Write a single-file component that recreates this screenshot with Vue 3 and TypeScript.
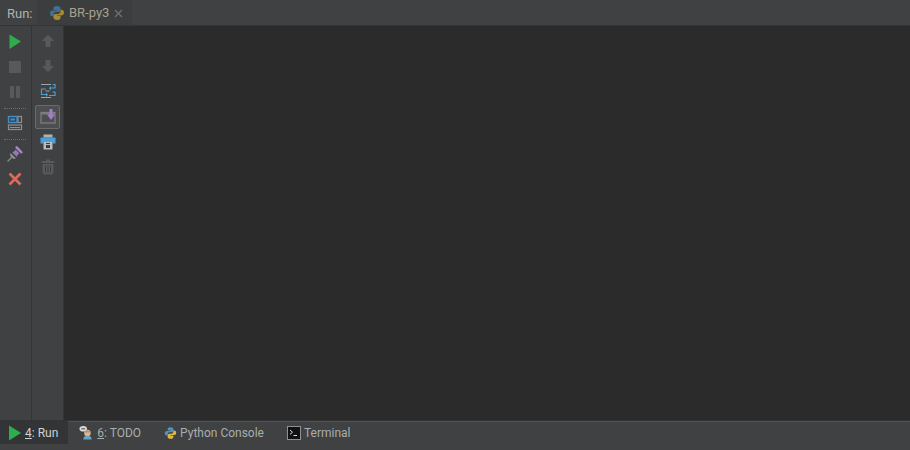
<script setup lang="ts">
const pyPaths = {
  blue: 'M7.800 1C5 1 4.500 2 4.500 3.200V5h3.600v.6H3.200C1.800 5.600 1 6.800 1 8.400s.9 2.800 2.200 2.800h1.300V9.400c0-1.300 1-2.300 2.300-2.300h2.800c1 0 1.900-.9 1.900-1.900V3.200C11.500 2 10.400 1 7.800 1z',
  gold: 'M8.200 15c2.800 0 3.300-1 3.300-2.200V11H7.900v-.6h4.900c1.400 0 2.200-1.200 2.200-2.800s-.9-2.800-2.200-2.800h-1.300v1.800c0 1.300-1 2.300-2.300 2.300H6.400c-1 0-1.900.9-1.900 1.900v2C4.500 14 5.600 15 8.200 15z',
}
</script>

<template>
  <div class="window">
    <header class="tabbar">
      <span class="run-label">Run:</span>
      <div class="tab">
        <svg width="16" height="16" viewBox="0 0 16 16">
          <path :d="pyPaths.blue" fill="#3f7396" />
          <path :d="pyPaths.gold" fill="#a68a34" />
        </svg>
        <span class="tab-name">BR-py3</span>
        <svg class="tab-close" width="9" height="9" viewBox="0 0 9 9">
          <path d="M1 1l7 7M8 1L1 8" stroke="#6f7375" stroke-width="1.100" fill="none" />
        </svg>
      </div>
    </header>

    <div class="body">
      <aside class="rail rail-one">
        <button class="tool">
          <svg width="16" height="16" viewBox="0 0 16 16"><path d="M2.500 0.500L14 7.500 2.500 15z" fill="#2fad4e" /></svg>
        </button>
        <button class="tool">
          <svg width="16" height="16" viewBox="0 0 16 16"><rect x="2" y="2" width="12" height="12" fill="#59595a" /></svg>
        </button>
        <button class="tool">
          <svg width="16" height="16" viewBox="0 0 16 16"><path d="M3 2h4v12H3zM9 2h4v12H9z" fill="#59595a" /></svg>
        </button>
        <div class="dots"></div>
        <button class="tool tool-tight">
          <svg width="16" height="16" viewBox="0 0 16 16">
            <rect x="1.500" y="1.500" width="8.500" height="6" fill="none" stroke="#3f8fc4" stroke-width="1.400" />
            <rect x="3.500" y="3.500" width="4.500" height="2" fill="#3f8fc4" />
            <rect x="11" y="1.500" width="3.500" height="6" fill="none" stroke="#8d8f91" stroke-width="1.200" />
            <rect x="1.500" y="10" width="13" height="4.500" fill="none" stroke="#8d8f91" stroke-width="1.200" />
            <rect x="3" y="12" width="10" height="1" fill="#8d8f91" />
          </svg>
        </button>
        <div class="dots"></div>
        <button class="tool tool-tight">
          <svg width="16" height="16" viewBox="0 0 16 16">
            <path d="M.5 15.500L5 11" stroke="#8a8d8f" stroke-width="1.300" fill="none" />
            <path d="M3.500 7L9 12.500 6.500 13 3 9.500z" fill="#8f9193" />
            <path d="M5 6c1.500 0 2.500-.5 3.500-2.500L12.500 7.500C10.500 8.500 10 9.500 10 11z" fill="#9a78b4" />
            <path d="M8.500 2l5.500 5.500c1.500.2 2-1.200 1-2.200L10.700.8C9.500-.3 8 .6 8.500 2z" fill="#ac88c8" />
          </svg>
        </button>
        <button class="tool">
          <svg width="16" height="16" viewBox="0 0 16 16"><path d="M2.500 2.500l11 11M13.500 2.500l-11 11" stroke="#dd6a5c" stroke-width="2.600" fill="none" /></svg>
        </button>
      </aside>

      <aside class="rail rail-two">
        <button class="tool">
          <svg width="16" height="16" viewBox="0 0 16 16"><path d="M8 1.500L14 8H10.500V14H5.500V8H2z" fill="#59595a" /></svg>
        </button>
        <button class="tool">
          <svg width="16" height="16" viewBox="0 0 16 16"><path d="M8 14.500L14 8H10.500V2H5.500V8H2z" fill="#59595a" /></svg>
        </button>
        <button class="tool">
          <svg width="16" height="16" viewBox="0 0 16 16">
            <path d="M1 1.500h10M5.500 8h4M1 14.500h10" stroke="#a0a2a4" fill="none" />
            <path d="M12.500 1.500h2.500v3.500h-5M6 6h-4.500v5.500h4.500M9 12.500h6v-3.500h-2.500" stroke="#4a9fd8" stroke-width="1.200" fill="none" />
            <path d="M11 3v4.500L9 5.200zM6 9.500v4.500L8 11.800z" fill="#4a9fd8" />
          </svg>
        </button>
        <button class="tool tool-active">
          <svg width="16" height="16" viewBox="0 0 16 16">
            <rect x="1" y="3.500" width="14" height="10.500" fill="none" stroke="#7b7d7f" stroke-width="1.300" />
            <rect x="1" y="3" width="14" height="2.500" fill="#7b7d7f" />
            <path d="M9.500 -1h3v6.500H15L11 11 7 5.500h2.500z" fill="#a57cc6" />
          </svg>
        </button>
        <button class="tool">
          <svg width="16" height="16" viewBox="0 0 16 16">
            <path d="M3.500 0.500h9v3h-9z" fill="#b0b2b4" />
            <path d="M0.500 3.500h15v6h-3V7.500h-9v2h-3z" fill="#4a9fd8" />
            <path d="M3.500 7.500h9v8h-9z" fill="#b9bbbc" />
            <path d="M6 9h4v1H6zM6 11h4v3H6z" fill="#3c3f41" />
          </svg>
        </button>
        <button class="tool">
          <svg width="16" height="16" viewBox="0 0 16 16">
            <path d="M6 .5h4v1.500h4.500v2H1.500V2H6z" fill="#59595a" />
            <path d="M2.500 5h11v8.500l-1.500 2H4l-1.500-2z" fill="#59595a" />
            <path d="M5.500 6.500v7M8 6.500v7M10.500 6.500v7" stroke="#3c3f41" fill="none" />
          </svg>
        </button>
      </aside>

      <main class="console"></main>
    </div>

    <footer class="statusbar">
      <div class="stripe stripe-active">
        <svg width="14" height="16" viewBox="0 0 14 16"><path d="M1 .5L13 8 1 15.500z" fill="#2fad4e" /></svg>
        <span class="stripe-label bright"><u>4</u>: Run</span>
      </div>
      <div class="stripe">
        <svg width="15" height="16" viewBox="0 0 16 16">
          <ellipse cx="4.500" cy="3.500" rx="4" ry="3" fill="#d9d9d9" />
          <path d="M2.500 3.500h4" stroke="#3c3f41" fill="none" />
          <circle cx="9" cy="8" r="3.500" fill="#e3b48c" />
          <path d="M5.500 7.500c0-3 7-3 7 0z" fill="#9a9a8c" />
          <path d="M4.500 15c0-3 2-4 4.500-4s4.500 1 4.500 4z" fill="#6aa2c8" />
        </svg>
        <span class="stripe-label"><u>6</u>: TODO</span>
      </div>
      <div class="stripe">
        <svg width="13" height="14" viewBox="0 0 16 16">
          <path :d="pyPaths.blue" fill="#4d93c4" />
          <path :d="pyPaths.gold" fill="#e0b53c" />
        </svg>
        <span class="stripe-label">Python Console</span>
      </div>
      <div class="stripe">
        <svg width="14" height="14" viewBox="0 0 14 14">
          <rect x=".5" y=".5" width="13" height="13" fill="#111" stroke="#8f9193" />
          <path d="M3 4l2.500 2.200L3 8.400" stroke="#dcdcdc" fill="none" />
          <path d="M6.500 9.500h3.500" stroke="#dcdcdc" fill="none" />
        </svg>
        <span class="stripe-label">Terminal</span>
      </div>
    </footer>
  </div>
</template>

<style scoped>
.window {
  width: 910px;
  height: 450px;
  display: flex;
  flex-direction: column;
  background: #3f4142;
  color: #a9adb0;
  font-family: Roboto, "Noto Sans", sans-serif;
  font-size: 12px;
  overflow: hidden;
}
.tabbar {
  height: 26px;
  box-sizing: border-box;
  display: flex;
  align-items: stretch;
  flex: none;
  border-bottom: 1px solid #333536;
}
.run-label {
  width: 37px;
  box-sizing: border-box;
  padding-left: 7px;
  line-height: 28px;
  font-size: 13px;
  color: #b0b2b4;
}
.tab {
  width: 95px;
  display: flex;
  align-items: center;
  background: #3b3d3e;
  padding-left: 12px;
  box-sizing: border-box;
}
.tab-name {
  margin-left: 4px;
  font-size: 13px;
  color: #a7a28e;
}
.tab-close {
  margin-left: 5px;
  margin-top: 1px;
}
.body {
  flex: 1;
  display: flex;
  min-height: 0;
}
.rail {
  width: 32px;
  flex: none;
  box-sizing: border-box;
  display: flex;
  flex-direction: column;
  align-items: center;
  border-right: 1px solid #333536;
}
.rail-one {
  padding: 3px 1px 0 0;
}
.rail-two {
  padding-top: 2px;
}
.tool {
  appearance: none;
  border: 0;
  background: none;
  padding: 0;
  width: 24px;
  height: 25px;
  display: flex;
  align-items: center;
  justify-content: center;
  flex: none;
}
.tool-tight {
  height: 24px;
}
.tool-active {
  width: 25px;
  height: 24px;
  margin-top: 2px;
  background: #4c4e50;
  border: 1px solid #696c6e;
  border-radius: 2px;
  box-sizing: border-box;
}
.dots {
  width: 22px;
  height: 0;
  margin: 4px 0 2px;
  border-top: 1px dotted #6a6d6f;
}
.console {
  flex: 1;
  background: #2b2b2b;
}
.statusbar {
  height: 30px;
  flex: none;
  box-sizing: border-box;
  display: flex;
  align-items: stretch;
  padding-bottom: 6px;
  border-top: 1px solid #313334;
  box-shadow: inset 0 1px 0 #4f5153;
}
.stripe {
  display: flex;
  align-items: center;
  padding: 0 12px 0 11px;
  gap: 3px;
}
.stripe-active {
  padding: 0 10px 0 8px;
  background: #323436;
}
.bright {
  color: #d0d2d4;
}
</style>
